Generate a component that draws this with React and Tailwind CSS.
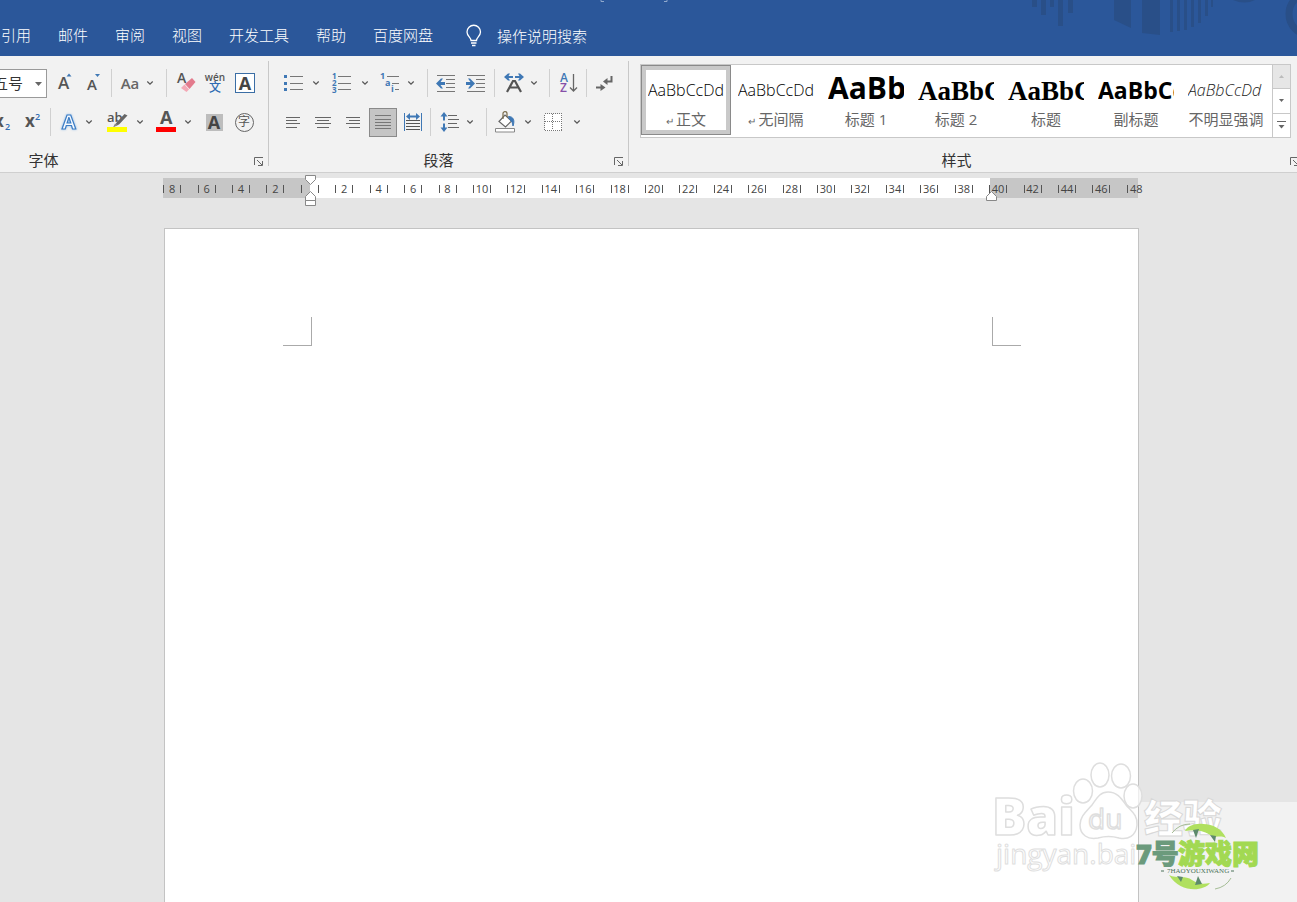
import React from "react";

const TABS = ["引用", "邮件", "审阅", "视图", "开发工具", "帮助", "百度网盘"];

const STYLES = [
  { name: "正文", mark: true, sample: "AaBbCcDd", cls: "text-[16px] leading-[20px] font-light text-black pt-1", selected: true },
  { name: "无间隔", mark: true, sample: "AaBbCcDd", cls: "text-[16px] leading-[20px] font-light text-black pt-1" },
  { name: "标题 1", sample: "AaBbC", cls: "text-[30px] leading-[32px] font-bold text-black" },
  { name: "标题 2", sample: "AaBbCc", cls: "font-['Liberation_Serif',serif] text-[27px] leading-[28px] font-bold text-black pt-1.5" },
  { name: "标题", sample: "AaBbCc", cls: "font-['Liberation_Serif',serif] text-[27px] leading-[28px] font-bold text-black pt-1.5" },
  { name: "副标题", sample: "AaBbCc", cls: "text-[23px] leading-[28px] font-bold text-black pt-1" },
  { name: "不明显强调", sample: "AaBbCcDd", cls: "text-[16px] leading-[20px] font-light italic text-[#222] pt-1" },
];

const RULER = Array.from({ length: 29 }, (_, i) => Math.abs(i * 2 - 8));

function Icon({ w = 20, h = 20, children, crisp, className = "" }) {
  return (
    <svg width={w} height={h} viewBox={`0 0 ${w} ${h}`} fill="none" shapeRendering={crisp ? "crispEdges" : "auto"} className={`shrink-0 overflow-visible ${className}`} aria-hidden="true">
      {children}
    </svg>
  );
}

function Tool({ label, className = "w-[30px]", children, pressed }) {
  return (
    <button type="button" aria-label={label} aria-pressed={pressed} className={`flex h-[29px] shrink-0 items-center justify-center ${className}`}>
      {children}
    </button>
  );
}

function Drop({ label, className = "w-4" }) {
  return (
    <button type="button" aria-label={label} className={`flex h-[29px] shrink-0 items-center justify-center ${className}`}>
      <Icon w={8} h={6}>
        <path d="M1.3 1.5 4 4.2l2.7-2.7" stroke="#555" strokeWidth="1.2" />
      </Icon>
    </button>
  );
}

function Sep({ className = "mx-1" }) {
  return <span className={`h-7 w-px shrink-0 bg-[#d0d0d0] ${className}`} />;
}

function Launcher({ label, className = "" }) {
  return (
    <button type="button" aria-label={label} className={`pt-0.5 ${className}`}>
      <Icon w={10} h={9}>
        <path d="M.5 8V.5H9M3 3l5 5M8.5 4v4.5H4" stroke="#666" />
      </Icon>
    </button>
  );
}

function Lines({ rows, w = 16, h = 14, color = "#666" }) {
  return (
    <Icon w={w} h={h} crisp>
      {rows.map(([x, y, len]) => (
        <rect key={y} x={x} y={y} width={len} height="1" fill={color} />
      ))}
    </Icon>
  );
}

function FontGroup() {
  return (
    <section aria-label="字体" className="flex w-[268px] shrink-0 flex-col pt-3">
      <div className="flex h-[30px] items-center">
        <div className="relative -ml-2 h-[29px] w-[55px] shrink-0">
          <select aria-label="字号" defaultValue="五号" className="h-full w-full appearance-none border border-[#9a9a9a] bg-white text-[15px] text-[#333] outline-none">
            <option>五号</option>
          </select>
          <svg width="7" height="4" viewBox="0 0 7 4" className="pointer-events-none absolute top-[13px] right-[5px]" aria-hidden="true">
            <path d="M0 0h7L3.500 4z" fill="#666" />
          </svg>
        </div>
        <Tool label="增大字号" className="ml-1 w-7">
          <Icon>
            <text x="3" y="16" fontSize="17" fontWeight="600" fill="#555">A</text>
            <path d="M11.500 3.500 14 .500 16.500 3.500z" fill="#3f78b5" />
          </Icon>
        </Tool>
        <Tool label="减小字号" className="w-7">
          <Icon>
            <text x="4" y="17" fontSize="15" fontWeight="600" fill="#555">A</text>
            <path d="M12 1h5l-2.500 3z" fill="#3f78b5" />
          </Icon>
        </Tool>
        <Sep />
        <Tool label="更改大小写" className="w-7">
          <span className="text-[15px] font-semibold text-[#666]">Aa</span>
        </Tool>
        <Drop label="更改大小写选项" className="-ml-0.5 w-4" />
        <Sep className="mr-1 ml-2" />
        <Tool label="清除所有格式">
          <Icon w={18} h={22}>
            <text x="0" y="11" fontSize="14" fontWeight="600" fill="#555">A</text>
            <path d="m4 16 3.500-3.500 4.500 5L9.500 20z" fill="#f4a9b6" />
            <path d="m8 12 7-6 3.500 4-6 7z" fill="#e37b8d" />
          </Icon>
        </Tool>
        <Tool label="拼音指南" className="w-7">
          <span className="flex flex-col items-center">
            <span className="text-[10px] leading-[8px] font-semibold text-[#555]">wén</span>
            <span className="text-[12px] leading-[13px] font-medium text-[#2f6cb3]">文</span>
          </span>
        </Tool>
        <Tool label="字符边框" className="w-8">
          <span className="flex h-5 w-5 items-center justify-center border border-[#3b6ea5] bg-white text-[18px] leading-none font-bold text-[#444]">A</span>
        </Tool>
      </div>
      <div className="mt-[9px] flex h-[30px] items-center">
        <Tool label="下标" className="-ml-[11px] w-7">
          <Icon w={16} h={20}>
            <text x="-1" y="15" fontSize="17" fontWeight="700" fill="#555">x</text>
            <text x="10" y="18" fontSize="9" fontWeight="600" fill="#2f6cb3">2</text>
          </Icon>
        </Tool>
        <Tool label="上标">
          <Icon w={15} h={20}>
            <text x="0" y="15" fontSize="17" fontWeight="700" fill="#555">x</text>
            <text x="10" y="8" fontSize="9" fontWeight="600" fill="#2f6cb3">2</text>
          </Icon>
        </Tool>
        <Sep className="mr-1 ml-[3px]" />
        <Tool label="文本效果" className="w-[26px]">
          <Icon w={20} h={24} className="drop-shadow-[0_0_1px_#8ab8e8]">
            <text x="4" y="19" fontSize="20" fontWeight="700" fill="#f6faff" stroke="#3d7dc4" strokeWidth="1.200">A</text>
          </Icon>
        </Tool>
        <Drop label="文本效果选项" />
        <Tool label="文本突出显示颜色" className="ml-2 w-6">
          <Icon w={22} h={24}>
            <text x="1" y="12" fontSize="13" fontWeight="600" fill="#555">ab</text>
            <path d="M18.500 4 11 12l-3 4.500 5-2 8.500-9z" fill="#666" />
            <path d="M7 17.500 9 13.500l3 1.500z" fill="#888" />
            <path d="M1 17h20v5H1z" fill="#ffff00" />
          </Icon>
        </Tool>
        <Drop label="突出显示选项" className="ml-0.5 w-[18px]" />
        <Tool label="字体颜色" className="ml-[3px] w-7">
          <Icon w={20} h={24}>
            <text x="4" y="14" fontSize="18" fontWeight="700" fill="#555">A</text>
            <path d="M0 17h20v5H0z" fill="#ff0000" />
          </Icon>
        </Tool>
        <Drop label="字体颜色选项" />
        <Tool label="字符底纹" className="ml-1 w-7">
          <span className="flex h-[17px] w-[17px] items-center justify-center bg-[#bdbdbd] text-[18px] leading-none font-bold text-[#444]">A</span>
        </Tool>
        <Tool label="带圈字符" className="w-8">
          <span className="flex h-[19px] w-[19px] items-center justify-center rounded-full border border-[#666] text-[12px] leading-none text-[#555]">字</span>
        </Tool>
      </div>
      <div className="mt-[13px] flex h-5 items-center">
        <span className="w-[87px] text-center text-[15px] leading-5 text-[#333]">字体</span>
        <Launcher label="字体设置" className="mr-1 ml-auto" />
      </div>
    </section>
  );
}

const arrowLeft = "M0 8.500 5 3.500h2L4.500 7H9v3H4.500L7 13.500H5z";
const arrowRight = "M9 8.500 4 3.500H2L4.500 7H0v3h4.500L2 13.500h2z";

function ParagraphGroup() {
  return (
    <section aria-label="段落" className="flex w-[359px] shrink-0 flex-col pt-3">
      <div className="flex h-[30px] items-center pl-[9px]">
        <Tool label="项目符号">
          <Icon w={19} h={18}>
            <path d="M0 1h3v3H0zM0 8h3v3H0zM0 14h3v3H0z" fill="#3f78b5" />
            <path d="M6 2.500h13M6 9.500h13M6 15.500h13" stroke="#777" />
          </Icon>
        </Tool>
        <Drop label="项目符号选项" />
        <Tool label="编号" className="ml-px w-8">
          <Icon w={19} h={20}>
            <g fontSize="8" fontWeight="700" fill="#3f78b5">
              <text x="0" y="6">1</text>
              <text x="0" y="13">2</text>
              <text x="0" y="20">3</text>
            </g>
            <path d="M6 3.500h13M6 10.500h13M6 16.500h13" stroke="#777" />
          </Icon>
        </Tool>
        <Drop label="编号选项" />
        <Tool label="多级列表" className="ml-0.5 w-[30px]">
          <Icon w={20} h={20}>
            <g fontSize="9" fontWeight="700" fill="#3f78b5">
              <text x="0" y="6">1</text>
              <text x="5" y="13">a</text>
              <text x="11" y="19">i</text>
            </g>
            <path d="M7 3.500h12M12 10.500h7M15 16.500h4" stroke="#777" />
          </Icon>
        </Tool>
        <Drop label="多级列表选项" className="w-3" />
        <Sep className="mr-0.5 ml-2.5" />
        <Tool label="减少缩进量">
          <Icon w={19} h={17}>
            <path d="M1 .5h18M10 4.500h9M10 8.500h9M10 12.500h9M1 16.500h18" stroke="#777" />
            <path d={arrowLeft} fill="#3f78b5" />
          </Icon>
        </Tool>
        <Tool label="增加缩进量">
          <Icon w={19} h={17}>
            <path d="M1 .5h18M10 4.500h9M10 8.500h9M10 12.500h9M1 16.500h18" stroke="#777" />
            <path d={arrowRight} fill="#3f78b5" />
          </Icon>
        </Tool>
        <Sep className="mx-1" />
        <Tool label="中文版式">
          <Icon w={20} h={20}>
            <path d="M0 4 4 .500h2L4.500 3H9v2H4.500L6 7.500H4zM20 4 16 .500h-2L15.500 3H11v2h4.500L14 7.500h2z" fill="#3f78b5" />
            <path d="m3 19 6-11h2l6 11M6 14.500h8" stroke="#555" strokeWidth="2.200" />
          </Icon>
        </Tool>
        <Drop label="中文版式选项" className="-ml-px w-3" />
        <Sep className="mr-1 ml-[9px]" />
        <Tool label="排序">
          <Icon w={18} h={22}>
            <text x="0" y="10" fontSize="12" fontWeight="600" fill="#3f78b5">A</text>
            <text x="0" y="20" fontSize="12" fontWeight="600" fill="#8650a8">Z</text>
            <path d="M13.500 2v17M10 15.500l3.500 3.500 3.500-3.500" stroke="#666" strokeWidth="1.300" />
          </Icon>
        </Tool>
        <Sep className="mx-0.5" />
        <Tool label="显示编辑标记">
          <Icon w={17} h={16}>
            <path d="M15.500 1v5.500H9" stroke="#666" strokeWidth="2" />
            <path d="m7 6.500 4.500-3.500v7z" fill="#666" />
            <path d="M0 12.500h5" stroke="#666" strokeWidth="2" />
            <path d="M9.500 12.500 4.500 9v7z" fill="#666" />
          </Icon>
        </Tool>
      </div>
      <div className="mt-[9px] flex h-[30px] items-center pl-[9px]">
        <Tool label="左对齐"><Lines rows={[[1, 2, 14], [1, 5, 11], [1, 8, 14], [1, 12, 11]]} /></Tool>
        <Tool label="居中"><Lines rows={[[0, 2, 16], [2, 5, 12], [0, 8, 16], [2, 12, 12]]} /></Tool>
        <Tool label="右对齐"><Lines rows={[[1, 2, 14], [4, 5, 11], [1, 8, 14], [4, 12, 11]]} /></Tool>
        <Tool label="两端对齐" pressed className="ml-px w-7 border border-[#8a8a8a] bg-[#c5c5c5]">
          <Lines rows={[[0, 0, 16], [0, 4, 16], [0, 7, 16], [0, 10, 16], [0, 13, 16]]} color="#777" />
        </Tool>
        <Tool label="分散对齐" className="ml-px w-[30px]">
          <Icon w={18} h={20}>
            <path d="M.5 1v18M17.500 1v18" stroke="#3f78b5" />
            <path d="M2 4.500 6 1v2.500h6V1l4 3.500L12 8V5.500H6V8z" fill="#3f78b5" />
            <path d="M2 8.500h14M2 11.500h14M2 14.500h14M2 17.500h14" stroke="#555" />
          </Icon>
        </Tool>
        <Sep className="mr-[3px] ml-0.5" />
        <Tool label="行和段落间距">
          <Icon w={19} h={20}>
            <path d="M4 0 7.500 4.500H5v4H3v-4H.5zM4 20 .5 15.500H3v-4h2v4h2.500z" fill="#3f78b5" />
            <path d="M8 3.500h9M8 7.500h11M8 11.500h9M8 15.500h11" stroke="#666" />
          </Icon>
        </Tool>
        <Drop label="行距选项" className="-ml-0.5 w-4" />
        <Sep className="mr-1 ml-2" />
        <Tool label="底纹" className="w-7">
          <Icon w={21} h={22}>
            <path d="M4 10.500 10 4l6.500 6L10.500 16z" fill="#fff" stroke="#666" strokeWidth="1.200" />
            <path d="M8 8V2.500c0-2.500 4-2.500 4 0V6" stroke="#776a4a" strokeWidth="1.200" />
            <path d="M13.500 5.500c5 0 6.500 4 4.500 9.500-.5-3-1-5-3-6z" fill="#3f78b5" stroke="#3f78b5" />
            <path d="M.5 17.500h19v3.500H.5z" fill="#fff" stroke="#888" />
          </Icon>
        </Tool>
        <Drop label="底纹选项" className="w-[18px]" />
        <Tool label="边框" className="ml-0.5 w-7">
          <Icon w={18} h={18} crisp>
            <path d="M.5.5h17v17H.5z" fill="#fff" stroke="#777" strokeDasharray="1 1" />
            <path d="M8.500 1v16M1 8.500h16" stroke="#777" strokeDasharray="1 1" />
          </Icon>
        </Tool>
        <Drop label="边框选项" className="ml-px w-[18px]" />
      </div>
      <div className="mt-[13px] flex h-5 items-center">
        <span className="flex-1 text-center text-[15px] leading-5 text-[#333]">段落</span>
        <Launcher label="段落设置" className="w-5 pl-1.5" />
      </div>
    </section>
  );
}

function StyleGroup() {
  return (
    <section aria-label="样式" className="flex min-w-0 flex-1 flex-col pt-2">
      <div className="mr-[6px] ml-[11px] flex h-[74px] border border-[#c8c8c8] bg-white">
        <div className="flex min-w-0 flex-1 overflow-hidden">
          {STYLES.map((s) => (
            <button
              key={s.name}
              type="button"
              aria-pressed={!!s.selected}
              className={`flex h-[70px] w-[90px] shrink-0 flex-col border px-[3px] ${s.selected ? "border-[#8a8a8a] shadow-[inset_0_0_0_4px_#c9c9c9]" : "border-transparent"}`}
            >
              <span className="mx-[3px] flex h-[43px] items-center self-stretch overflow-hidden whitespace-nowrap">
                <span className={s.cls}>{s.sample}</span>
              </span>
              <span className="self-center text-[15px] leading-[20px] whitespace-nowrap text-[#666]">
                {s.mark && <span className="mr-0.5 text-[10px]">↵</span>}
                {s.name}
              </span>
            </button>
          ))}
        </div>
        <div className="flex w-[18px] shrink-0 flex-col border-l border-[#c8c8c8]">
          <button type="button" aria-label="上一行" className="flex flex-1 items-center justify-center bg-[#e6e6e6]">
            <Icon w={5} h={3}><path d="M0 3h5L2.500 0z" fill="#bbb" /></Icon>
          </button>
          <button type="button" aria-label="下一行" className="flex flex-1 items-center justify-center border-y border-[#c8c8c8]">
            <Icon w={5} h={3}><path d="M0 0h5L2.500 3z" fill="#666" /></Icon>
          </button>
          <button type="button" aria-label="更多样式" className="flex flex-1 items-center justify-center">
            <Icon w={9} h={8}><path d="M0 .5h9" stroke="#666" /><path d="M1.500 4h6l-3 3.500z" fill="#666" /></Icon>
          </button>
        </div>
      </div>
      <div className="mt-3 flex h-5 items-center">
        <span className="flex-1 text-center text-[15px] leading-5 text-[#333]">样式</span>
        <Launcher label="样式窗格" className="w-[13px] shrink-0 pl-1.5" />
      </div>
    </section>
  );
}

function Header() {
  return (
    <header className="relative flex h-14 items-center overflow-hidden bg-[#2b579a] pt-4 text-[15px] leading-5 font-light text-white">
      <svg width="267" height="56" viewBox="0 0 267 56" className="absolute top-0 right-0" aria-hidden="true">
        <g fill="#294f88">
          <path d="M2 0h5v7H2zM11 0h5v15h-5zM20 0h4v7h-4zM28 0h5v26h-5zM38 0h5v13h-5zM84 0h17v28l-17-8zM112 0h18v35l-18-2z" />
          <path d="M140 0h3v32h-3zM147 0h3v31h-3zM154 0h3v30h-3zM161 0h3v27h-3zM168 0h3v23h-3zM175 0h3v16h-3zM181 0h2v7h-2z" />
        </g>
        <path d="M203 0q12 5 22 0" fill="#294f88" />
        <circle cx="280" cy="14" r="21" fill="none" stroke="#294f88" strokeWidth="7" />
      </svg>
      <svg width="68" height="2" viewBox="0 0 68 2" className="absolute top-0 left-[600px]" aria-hidden="true">
        <path d="M1 0v1.500h3M67 0v1.500h-3" fill="none" stroke="#8fa8cc" />
      </svg>
      <nav className="relative flex items-center gap-[27px] pb-0.5 pl-px">
        {TABS.map((t) => (
          <a key={t} href="#" className="whitespace-nowrap">{t}</a>
        ))}
      </nav>
      <button type="button" className="relative ml-[33px] flex items-center gap-[15px] whitespace-nowrap">
        <Icon w={16} h={22}>
          <path d="M5 15.500c0-3-4-4.500-4-8.500a6.500 6.500 0 0 1 13.500 0c0 4-4 5.500-4 8.500z" stroke="#fff" strokeWidth="1.300" />
          <path d="M5 18h5.500M6 20.500h3.500" stroke="#fff" strokeWidth="1.500" />
        </Icon>
        操作说明搜索
      </button>
    </header>
  );
}

function Ruler() {
  return (
    <div className="relative mt-[5px] flex h-5 bg-[#c6c6c6] text-[11px] text-[#444]">
      <div className="mr-[148px] ml-[147px] flex-1 bg-white" />
      <div className="absolute inset-y-0 -left-2 grid w-[998px] grid-cols-[repeat(29,1fr)] items-center pt-0.5">
        {RULER.map((n, i) => (
          <span key={i} className={`mx-auto flex h-2 w-[18px] items-center justify-center border-l border-[#555] ${i === 28 ? "" : "border-r"}`}>
            {n || ""}
          </span>
        ))}
      </div>
      <svg width="12" height="32" viewBox="0 0 12 32" className="absolute -top-[3px] left-[142px]" aria-hidden="true">
        <path d="M.5.5h10v4l-5 5-5-5zM.5 25.500v-4l5-5 5 5v4zM.5 25.500h10v5H.5z" fill="#fff" stroke="#888" />
      </svg>
      <svg width="12" height="11" viewBox="0 0 12 11" className="absolute top-[13px] right-[140px]" aria-hidden="true">
        <path d="M.5 9.500v-4l5-5 5 5v4z" fill="#fff" stroke="#888" />
      </svg>
    </div>
  );
}

function BaiduMark() {
  return (
    <svg width="240" height="120" viewBox="0 0 240 120" className="absolute right-[67px] bottom-[24px]" aria-hidden="true">
      <g fill="#fff" fillOpacity="0.7" stroke="#dedede" strokeWidth="1.500" strokeLinejoin="round">
        <g fontWeight="800">
          <text x="2" y="77" fontSize="51">Bai</text>
          <text x="154" y="74" fontSize="39" fillOpacity="1" stroke="#d8d8d8" strokeWidth="1">经验</text>
        </g>
        <ellipse cx="93" cy="33" rx="9.500" ry="12" />
        <ellipse cx="110" cy="17" rx="9" ry="12" />
        <ellipse cx="131" cy="18" rx="9.500" ry="12" />
        <ellipse cx="143" cy="38" rx="9" ry="12" />
        <path d="M118 34c9 0 13 6 18 13 5 6 12 10 11 20-1 11-9 15-18 13-7-2-14-2-21 0-10 2-18-3-18-13 0-9 7-14 12-20 5-7 8-13 16-13z" />
        <text x="98" y="71" fontSize="28">du</text>
        <text x="6" y="106" fontSize="28" strokeWidth="1">jingyan.bai</text>
      </g>
    </svg>
  );
}

function SiteLogo() {
  return (
    <svg width="158" height="100" viewBox="0 0 158 100" className="absolute right-0 bottom-0 overflow-visible" aria-hidden="true">
      <path d="M33 31q7-9 18-9M92 76q-5 9-16 11" fill="none" stroke="#a5bd96" />
      <path d="M46 29c2-5 10-8 18-7 10 0 19 5 23 14-6-3-9 0-14-2-8-5-15-7-27-5z" fill="#b0e05f" />
      <path d="M30 73c8 4 17 0 23 5 5 3 9 5 18 3-7 9-30 10-41-8z" fill="#b0e05f" />
      <path d="m54 28 6-1-3 9zM71 33l6 1-1 6zM38 74l6 1-2 5zM56 83l3-9 4 8z" fill="#5d8a6c" />
      <g fontSize="27" fontWeight="900">
        <text x="-3" y="62" fill="#6b9a7c" stroke="#6b9a7c">7号</text>
        <text x="39" y="62" fill="#a2d952" stroke="#a2d952" strokeWidth="1">游戏网</text>
      </g>
      <text x="28" y="71" fontSize="7" fill="#4c725b" className="font-['Liberation_Serif',serif]">7HAOYOUXIWANG</text>
      <path d="M22 69h3M92 69h3" stroke="#4c725b" />
    </svg>
  );
}

export default function App() {
  return (
    <div className="relative flex min-h-screen flex-col overflow-hidden bg-[#e5e5e5] font-['Open_Sans','Noto_Sans_CJK_SC',sans-serif]">
      <Header />
      <div className="flex overflow-hidden border-b border-[#cfcfcf] bg-[#f2f2f2] pb-0.5">
        <FontGroup />
        <span className="mt-[5px] mb-1 w-px shrink-0 bg-[#c8c8c8]" />
        <ParagraphGroup />
        <span className="mt-[5px] mb-1 w-px shrink-0 bg-[#c8c8c8]" />
        <StyleGroup />
      </div>
      <main className="flex flex-1 flex-col items-center pl-1.5">
        <div className="w-full max-w-[977px] pr-0.5">
          <Ruler />
        </div>
        <article aria-label="文档页面" className="mt-[30px] flex w-full max-w-[975px] flex-1 items-start justify-between border border-b-0 border-[#c3c3c3] bg-white pr-[117px] pl-[118px] pt-[88px]">
          <span className="h-[29px] w-[29px] border-r border-b border-[#aaa]" />
          <span className="h-[29px] w-[29px] border-b border-l border-[#aaa]" />
        </article>
      </main>
      <div className="absolute right-0 bottom-0 h-[100px] w-[158px] bg-[#f2f2f2]" />
      <BaiduMark />
      <SiteLogo />
    </div>
  );
}
